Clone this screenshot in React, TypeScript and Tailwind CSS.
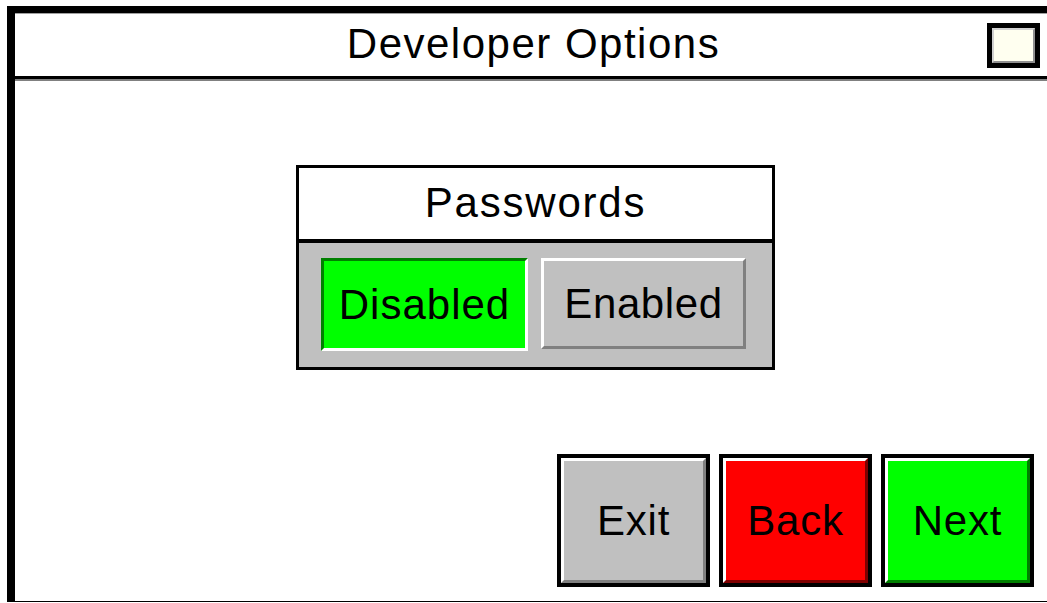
export default function App() {
  const bottomButtons = [
    { label: 'Exit', fill: 'bg-[#c0c0c0]', bevel: 'border-b-[#808080] border-r-[#808080]' },
    { label: 'Back', fill: 'bg-[#ff0000]', bevel: 'border-b-[#800000] border-r-[#800000]' },
    { label: 'Next', fill: 'bg-[#00ff00]', bevel: 'border-b-[#008000] border-r-[#008000]' },
  ];

  return (
    <div className="w-[1047px] h-[603px] overflow-hidden bg-white font-['Liberation_Sans',Arial,sans-serif] text-black">
      <div className="ml-[7px] mt-[6px] w-[1053px] h-[596px] border-l-8 border-r-8 border-t-[7px] border-b border-black flex flex-col">
        <div className="h-px bg-[#a0a0a0]" />

        {/* title bar */}
        <div className="h-[62px] grid grid-cols-[1fr_auto_1fr] items-center">
          <div />
          <h1 className="text-[42px] leading-none tracking-[1.5px] pb-[3px]">Developer Options</h1>
          <div className="flex justify-end pr-[12px]">
            <div className="w-[53px] h-[45px] border-[5px] border-black">
              <div className="w-full h-full bg-[#fffff0] border-2 border-t-[#d0d0d0] border-l-[#d0d0d0] border-b-[#909090] border-r-[#909090]" />
            </div>
          </div>
        </div>
        <div className="h-[3px] bg-black" />
        <div className="h-[2px] bg-[#808080]" />

        {/* passwords panel */}
        <div className="ml-[281px] mt-[84px] w-[479px] h-[205px] border-[3px] border-black flex flex-col">
          <div className="h-[75px] bg-white flex items-center justify-center border-b-4 border-black">
            <span className="text-[42px] leading-none tracking-[1.8px] pb-[2px]">Passwords</span>
          </div>
          <div className="flex-1 bg-[#c0c0c0] flex gap-[13px] pl-[22px] pt-[15px]">
            <button className="w-[207px] h-[93px] bg-[#00ff00] border-[3px] border-t-[#008000] border-l-[#008000] border-b-white border-r-white flex items-center justify-center text-[42px] leading-none tracking-[1px]">
              Disabled
            </button>
            <button className="w-[205px] h-[91px] bg-[#c0c0c0] border-[3px] border-t-white border-l-white border-b-[#808080] border-r-[#808080] flex items-center justify-center text-[42px] leading-none tracking-[0.6px]">
              Enabled
            </button>
          </div>
        </div>

        {/* navigation buttons */}
        <div className="mt-auto flex justify-end gap-[9px] pr-[18px] pb-[14px]">
          {bottomButtons.map((b) => (
            <button key={b.label} className="w-[153px] h-[133px] border-4 border-black">
              <div
                className={`w-full h-full ${b.fill} border-[3px] border-t-white border-l-white ${b.bevel} flex items-center justify-center text-[42px] leading-none tracking-[0.8px]`}
              >
                {b.label}
              </div>
            </button>
          ))}
        </div>
      </div>
    </div>
  );
}
